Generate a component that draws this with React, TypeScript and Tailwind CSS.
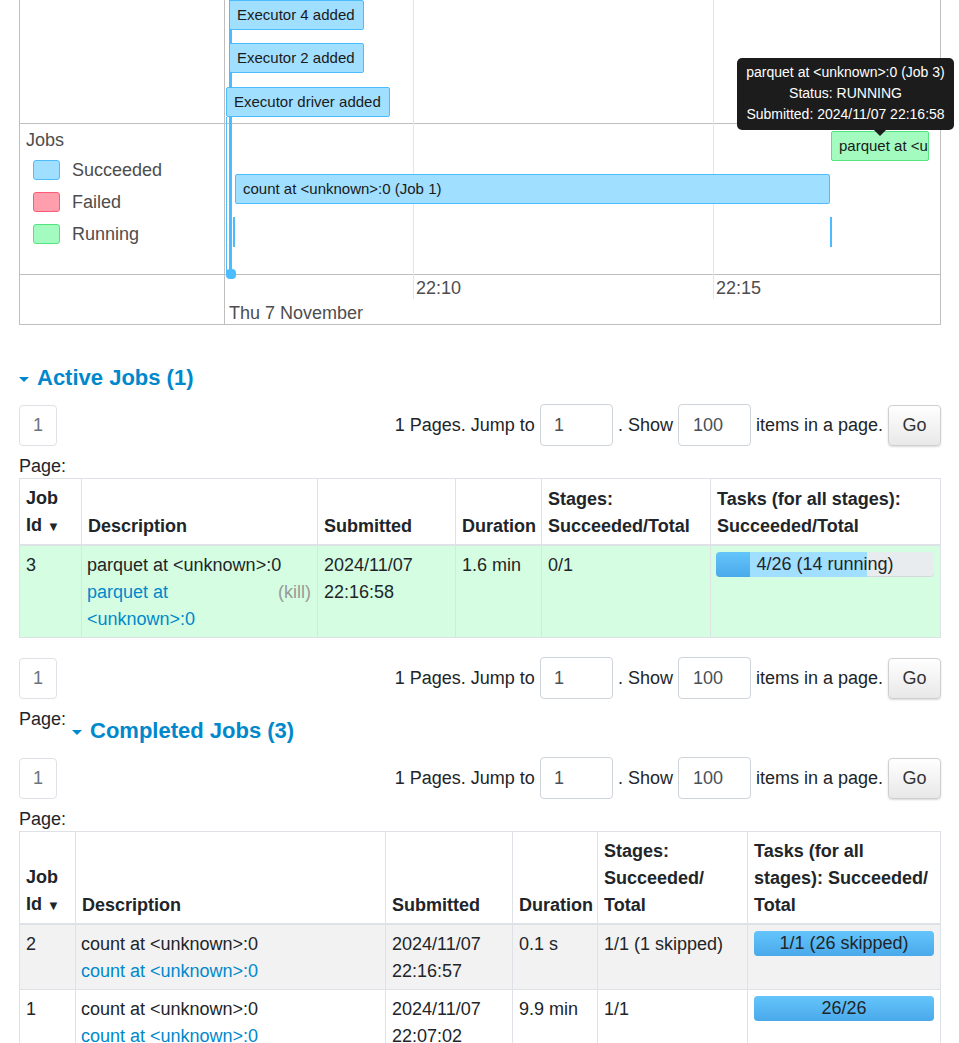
const Ev = ({ label, cls }: { label: string; cls: string }) => (
  <div className={`absolute h-[30px] rounded-[2px] border border-[#4dbcff] bg-[#a0dfff] pl-[7px] text-[15px] leading-[28px] text-[#1a1a1a] whitespace-nowrap ${cls}`}>
    {label}
  </div>
);

const Legend = ({ label, cls }: { label: string; cls: string }) => (
  <div className="flex h-[32px] items-center">
    <span className={`ml-[13px] h-[20px] w-[27px] rounded-[3px] border ${cls}`} />
    <span className="ml-[12px] text-[#4d4d4d]">{label}</span>
  </div>
);

function Timeline() {
  return (
    <div className="relative border-x border-b border-[#bfbfbf]">
      <div className="flex h-[124px] border-b border-[#bfbfbf]">
        <div className="w-[205px] border-r border-[#bfbfbf]" />
      </div>
      <div className="flex h-[151px] border-b border-[#bfbfbf]">
        <div className="w-[205px] border-r border-[#bfbfbf] pt-[4px]">
          <div className="pl-[6px] leading-[24px] text-[#4d4d4d]">Jobs</div>
          <div className="mt-[2px]">
            <Legend label="Succeeded" cls="border-[#4dbcff] bg-[#a0dfff]" />
            <Legend label="Failed" cls="border-[#ff5a75] bg-[#ff9fae]" />
            <Legend label="Running" cls="border-[#53e381] bg-[#a3fbc0]" />
          </div>
        </div>
      </div>
      <div className="flex h-[49px]">
        <div className="w-[205px] border-r border-[#bfbfbf]" />
      </div>

      {/* chart canvas */}
      <div className="absolute left-[393px] top-0 h-[299px] w-px bg-[#e5e5e5]" />
      <div className="absolute left-[693px] top-0 h-[299px] w-px bg-[#e5e5e5]" />
      <div className="absolute left-[209px] top-0 h-[274px] w-[3px] bg-[#4dbcff]" />
      <div className="absolute left-[206px] top-[117px] h-[157px] w-px bg-[#4dbcff]" />
      <div className="absolute left-[206px] top-[269px] h-[10px] w-[10px] rounded-[4px] bg-[#4dbcff]" />

      <Ev label="Executor 4 added" cls="left-[209px] top-0 w-[135px]" />
      <Ev label="Executor 2 added" cls="left-[209px] top-[43px] w-[135px]" />
      <Ev label="Executor driver added" cls="left-[206px] top-[87px] w-[164px]" />
      <Ev label="count at <unknown>:0 (Job 1)" cls="left-[215px] top-[174px] w-[595px]" />
      <div className="absolute left-[213px] top-[217px] h-[30px] w-[2px] bg-[#4dbcff]" />
      <div className="absolute left-[810px] top-[217px] h-[30px] w-[2px] bg-[#4dbcff]" />
      <div className="absolute left-[811px] top-[131px] h-[30px] w-[98px] overflow-hidden rounded-[2px] border border-[#53e381] bg-[#a3fbc0] pl-[7px] text-[15px] leading-[28px] text-[#1a1a1a] whitespace-nowrap">
        parquet at &lt;unknown&gt;:0 (Job 3)
      </div>

      <div className="absolute left-[717px] top-[58px] w-[217px] rounded-[5px] bg-[#1c1c1c] pt-[4px] pb-[5px] text-center text-[14px] leading-[21px] text-white">
        <div>parquet at &lt;unknown&gt;:0 (Job 3)</div>
        <div>Status: RUNNING</div>
        <div>Submitted: 2024/11/07 22:16:58</div>
        <div className="absolute left-[137px] top-full h-0 w-0 border-x-[6px] border-t-[6px] border-x-transparent border-t-[#1c1c1c]" />
      </div>

      <div className="absolute left-[396px] top-[275px] text-[#4d4d4d]">22:10</div>
      <div className="absolute left-[696px] top-[275px] text-[#4d4d4d]">22:15</div>
      <div className="absolute left-[209px] top-[300px] text-[#4d4d4d]">Thu 7 November</div>
    </div>
  );
}

function Heading({ title, cls = "" }: { title: string; cls?: string }) {
  return (
    <h4 className={`flex items-center text-[22px] font-bold leading-[26px] text-[#0088cc] ${cls}`}>
      <span className="mr-[8px] mt-[2px] h-0 w-0 border-x-[5px] border-t-[5px] border-x-transparent border-t-[#0088cc]" />
      {title}
    </h4>
  );
}

function Pager() {
  return (
    <div className="flex items-center justify-between">
      <span className="flex h-[41px] w-[38px] items-center justify-center rounded-[4px] border border-[#dee2e6] text-[#6c757d]">1</span>
      <div className="flex items-center gap-[5px]">
        <span>1 Pages. Jump to</span>
        <span className="flex h-[42px] w-[73px] items-center rounded-[4px] border border-[#ced4da] pl-[13px] text-[#495057]">1</span>
        <span>. Show</span>
        <span className="flex h-[42px] w-[73px] items-center rounded-[4px] border border-[#ced4da] pl-[14px] text-[#495057]">100</span>
        <span>items in a page.</span>
        <button className="h-[41px] w-[53px] rounded-[4px] border border-[#cfcfcf] bg-linear-to-b from-white to-[#e8e8e8] text-[#333] shadow-[0_1px_2px_rgba(0,0,0,0.15)]">Go</button>
      </div>
    </div>
  );
}

const SortArrow = () => <span className="ml-[5px] text-[13px]">▼</span>;

const Bar = ({ done, running, total, label }: { done: number; running: number; total: number; label: string }) => (
  <div className="relative h-[25px] overflow-hidden rounded-[4px] bg-[#e9ecef] shadow-[inset_0_-1px_0_rgba(0,0,0,0.08)]">
    <div className="absolute inset-y-0 left-0 bg-linear-to-b from-[#64c5fb] to-[#4aa9ea]" style={{ width: `${(done / total) * 100}%` }} />
    <div className="absolute inset-y-0 bg-[#a0dfff]" style={{ left: `${(done / total) * 100}%`, width: `${(running / total) * 100}%` }} />
    <div className="relative text-center leading-[25px] text-[#212529]">{label}</div>
  </div>
);

const th = "border border-[#dee2e6] border-b-2 px-[6px] pt-[6px] pb-[4px] text-left align-bottom font-bold";
const td = "border border-[#dee2e6] px-[6px] pt-[6px] pb-[4px] align-top";

function ActiveTable() {
  return (
    <table className="w-full table-fixed border-collapse">
      <colgroup>
        <col className="w-[62px]" />
        <col className="w-[236px]" />
        <col className="w-[138px]" />
        <col className="w-[86px]" />
        <col className="w-[169px]" />
        <col />
      </colgroup>
      <thead>
        <tr>
          <th className={th}>Job<br />Id<SortArrow /></th>
          <th className={th}>Description</th>
          <th className={th}>Submitted</th>
          <th className={th}>Duration</th>
          <th className={th}>Stages:<br />Succeeded/Total</th>
          <th className={th}>Tasks (for all stages):<br />Succeeded/Total</th>
        </tr>
      </thead>
      <tbody className="bg-[#d5fde1]">
        <tr>
          <td className={td}>3</td>
          <td className={`${td} pl-[5px]`}>
            <div>parquet at &lt;unknown&gt;:0</div>
            <div>
              <span className="float-right text-[#999]">(kill)</span>
              <a className="text-[#0088cc]">parquet at<br />&lt;unknown&gt;:0</a>
            </div>
          </td>
          <td className={td}>2024/11/07<br />22:16:58</td>
          <td className={td}>1.6 min</td>
          <td className={td}>0/1</td>
          <td className={`${td} pl-[5px]`}><Bar done={4} running={14} total={26} label="4/26 (14 running)" /></td>
        </tr>
      </tbody>
    </table>
  );
}

const completed = [
  { id: 2, sub: ["2024/11/07", "22:16:57"], dur: "0.1 s", stages: "1/1 (1 skipped)", tasks: "1/1 (26 skipped)", bg: "bg-[#f2f2f2]" },
  { id: 1, sub: ["2024/11/07", "22:07:02"], dur: "9.9 min", stages: "1/1", tasks: "26/26", bg: "bg-white" },
  { id: 0, sub: ["2024/11/07", "22:06:55"], dur: "2 s", stages: "1/1", tasks: "1/1", bg: "bg-[#f2f2f2]" },
];

function CompletedTable() {
  return (
    <table className="w-full table-fixed border-collapse">
      <colgroup>
        <col className="w-[56px]" />
        <col className="w-[310px]" />
        <col className="w-[127px]" />
        <col className="w-[85px]" />
        <col className="w-[150px]" />
        <col />
      </colgroup>
      <thead>
        <tr>
          <th className={th}>Job<br />Id<SortArrow /></th>
          <th className={th}>Description</th>
          <th className={th}>Submitted</th>
          <th className={th}>Duration</th>
          <th className={th}>Stages:<br />Succeeded/<br />Total</th>
          <th className={th}>Tasks (for all<br />stages): Succeeded/<br />Total</th>
        </tr>
      </thead>
      <tbody>
        {completed.map((r) => (
          <tr key={r.id} className={r.bg}>
            <td className={td}>{r.id}</td>
            <td className={`${td} pl-[5px]`}>
              <div>count at &lt;unknown&gt;:0</div>
              <a className="text-[#0088cc]">count at &lt;unknown&gt;:0</a>
            </td>
            <td className={td}>{r.sub[0]}<br />{r.sub[1]}</td>
            <td className={td}>{r.dur}</td>
            <td className={td}>{r.stages}</td>
            <td className={`${td} pl-[6px]`}><Bar done={1} running={0} total={1} label={r.tasks} /></td>
          </tr>
        ))}
      </tbody>
    </table>
  );
}

export default function App() {
  return (
    <div className="h-[1043px] overflow-hidden bg-white font-['Liberation_Sans',Arial,sans-serif] text-[18px] leading-[27px] text-[#212529]">
      <div className="ml-[19px] w-[922px]">
        <Timeline />

        <Heading title="Active Jobs (1)" cls="mt-[40px]" />
        <div className="mt-[13px]"><Pager /></div>
        <div className="mt-[8px] leading-[24px]">Page:</div>
        <ActiveTable />

        <div className="mt-[19px]"><Pager /></div>
        <div className="mt-[8px] flex items-start">
          <span className="leading-[24px]">Page:</span>
          <Heading title="Completed Jobs (3)" cls="ml-[6px] mt-[11px]" />
        </div>
        <div className="mt-[13px]"><Pager /></div>
        <div className="mt-[8px] leading-[24px]">Page:</div>
        <CompletedTable />
      </div>
    </div>
  );
}
